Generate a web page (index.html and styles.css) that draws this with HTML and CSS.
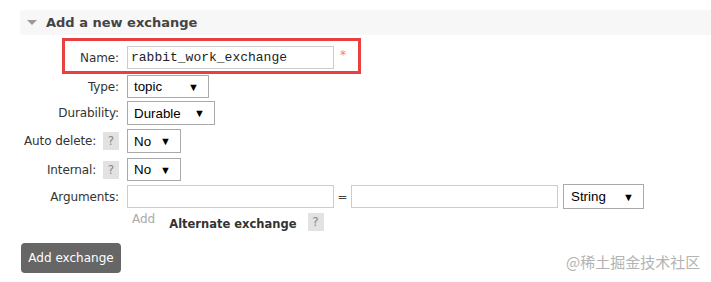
FILE: index.html
```html
<!DOCTYPE html>
<html>
<head>
<meta charset="utf-8">
<link rel="stylesheet" href="styles.css">
</head>
<body>
<div class="page">
  <div class="section-head"><span class="tri"></span><span class="title">Add a new exchange</span></div>
  <div class="form">
    <div class="row r-name">
      <div class="label">Name:</div>
      <div class="ctrl"><div class="input mono">rabbit_work_exchange</div><span class="req">*</span></div>
    </div>
    <div class="row r-type">
      <div class="label">Type:</div>
      <div class="ctrl"><div class="select w-type"><span>topic</span><span class="arr">▼</span></div></div>
    </div>
    <div class="row r-dur">
      <div class="label">Durability:</div>
      <div class="ctrl"><div class="select w-dur"><span>Durable</span><span class="arr">▼</span></div></div>
    </div>
    <div class="row r-auto">
      <div class="label">Auto delete: <span class="help">?</span></div>
      <div class="ctrl"><div class="select w-no"><span>No</span><span class="arr">▼</span></div></div>
    </div>
    <div class="row r-int">
      <div class="label">Internal: <span class="help">?</span></div>
      <div class="ctrl"><div class="select w-no"><span>No</span><span class="arr">▼</span></div></div>
    </div>
    <div class="row r-args">
      <div class="label">Arguments:</div>
      <div class="ctrl">
        <div class="input"></div><span class="eq">=</span><div class="input"></div>
        <div class="select w-str"><span>String</span><span class="arr">▼</span></div>
      </div>
    </div>
    <div class="row r-add">
      <div class="label"></div>
      <div class="ctrl"><span class="add">Add</span><span class="alt">Alternate exchange</span><span class="help help2">?</span></div>
    </div>
  </div>
  <div class="btn">Add exchange</div>
  <div class="highlight"></div>
  <div class="watermark">@稀土掘金技术社区</div>
</div>
</body>
</html>
```
FILE: styles.css
```css
html, body { margin: 0; padding: 0; background: #fff; }
body { font-family: "DejaVu Sans", Verdana, sans-serif; font-size: 12px; color: #333; }
.page { position: relative; width: 711px; height: 282px; overflow: hidden; padding-top: 10px; box-sizing: border-box; }
.section-head { margin-left: 20px; height: 25px; background: #f7f7f7; border-radius: 3px 0 0 3px; display: flex; align-items: center; }
.tri { width: 0; height: 0; border-left: 5px solid transparent; border-right: 5px solid transparent; border-top: 5px solid #999; margin-left: 7px; margin-right: 9px; }
.title { font-weight: bold; font-size: 13px; color: #444; }
.form { margin-top: 11px; }
.row { display: flex; align-items: center; height: 23px; }
.r-name { margin-bottom: 6px; }
.r-type { margin-bottom: 3px; }
.r-dur { margin-bottom: 4px; height: 24px; }
.r-auto { margin-bottom: 5px; height: 24px; }
.r-int { margin-bottom: 4px; }
.r-args { margin-bottom: 0; }
.label { width: 119px; text-align: right; flex: none; display: flex; justify-content: flex-end; align-items: center; white-space: pre; letter-spacing: -0.1px; }
.ctrl { margin-left: 8px; display: flex; align-items: center; }
.input { width: 205px; height: 21px; border: 1px solid #ccc; box-sizing: content-box; background: #fff; }
.mono { font-family: "Liberation Mono", monospace; font-size: 13px; color: #222; line-height: 21px; padding-left: 3px; width: 202px; }
.req { color: #f37b7b; margin-left: 6px; font-size: 12px; margin-top: -6px; }
.select { height: 100%; border: 1px solid #aaa; box-sizing: border-box; display: flex; align-items: center; justify-content: space-between; padding: 0 9px 0 6px; font-family: "Liberation Sans", Arial, sans-serif; font-size: 13.33px; color: #000; background: #fff; }
.r-name .ctrl, .r-type .ctrl, .r-dur .ctrl, .r-auto .ctrl, .r-int .ctrl, .r-args .ctrl { height: 100%; }
.arr { font-size: 11px; }
.w-type { width: 82px; }
.w-dur { width: 88px; }
.w-no { width: 54px; }
.w-str { width: 81px; height: 25px; margin-left: 5px; padding-left: 7px; }
.r-args .input { height: 21px; }
.eq { width: 17px; text-align: center; color: #444; }
.help { display: inline-block; width: 16px; height: 18px; background: #e2e2e2; color: #888; text-align: center; line-height: 18px; font-size: 12px; margin-left: 3px; }
.r-add { height: 22px; margin-top: 4px; align-items: flex-start; }
.r-add .ctrl { align-items: flex-start; }
.add { color: #aaa; margin-left: 5px; margin-top: 0; }
.alt { font-weight: bold; font-size: 11.5px; color: #333; margin-left: 14px; margin-top: 5px; }
.help2 { margin-left: 11px; margin-top: 1px; }
.btn { margin-left: 21px; margin-top: 9px; width: 100px; height: 30px; background: #666; color: #fff; border-radius: 4px; display: flex; align-items: center; justify-content: center; font-size: 12px; }
.highlight { position: absolute; left: 62px; top: 38px; width: 299px; height: 36px; border: 3px solid #e8403f; box-sizing: border-box; }
.watermark { position: absolute; left: 566px; top: 251px; font-family: "Noto Sans CJK SC", sans-serif; font-size: 15px; color: #b3b3b3; letter-spacing: 0; }
```
